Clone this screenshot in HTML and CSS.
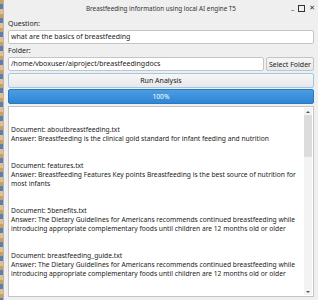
FILE: index.html
```html
<!DOCTYPE html>
<html lang="en">
<head>
  <meta charset="UTF-8" />
  <title>Breastfeeding information using local AI engine T5</title>
  <link rel="stylesheet" href="styles.css">
</head>
<body>
  <div class="desktop-edge"></div>

  <div class="window">
    <div class="titlebar">
      <span class="title">Breastfeeding information using local AI engine T5</span>
      <div class="controls">
        <span class="ctl">_</span>
        <span class="ctl box"></span>
        <span class="ctl">✕</span>
      </div>
    </div>

    <div class="content">
      <label class="label">Question:</label>
      <div class="input">what are the basics of breastfeeding</div>

      <label class="label">Folder:</label>
      <div class="folder-row">
        <div class="input grow">/home/vboxuser/aiproject/breastfeedingdocs</div>
        <button class="btn">Select Folder</button>
      </div>

      <button class="btn run">Run Analysis</button>

      <div class="progress">100%</div>

      <div class="results">
        <div class="results-text">

Document: aboutbreastfeeding.txt
Answer: Breastfeeding is the clinical gold standard for infant feeding and nutrition


Document: features.txt
Answer: Breastfeeding Features Key points Breastfeeding is the best source of nutrition for most infants


Document: 5benefits.txt
Answer: The Dietary Guidelines for Americans recommends continued breastfeeding while introducing appropriate complementary foods until children are 12 months old or older


Document: breastfeeding_guide.txt
Answer: The Dietary Guidelines for Americans recommends continued breastfeeding while introducing appropriate complementary foods until children are 12 months old or older</div>
        <div class="scrollbar">
          <span class="arrow up"></span>
          <span class="thumb"></span>
          <span class="arrow down"></span>
        </div>
      </div>
    </div>
  </div>
</body>
</html>
```

FILE: styles.css
```css
body {
  margin: 0;
  width: 318px;
  height: 300px;
  display: flex;
  overflow: hidden;
  background: #efefef;
  font-family: "Noto Sans", "DejaVu Sans", sans-serif;
  font-size: 6.7px;
  color: #222;
}

.desktop-edge {
  width: 3px;
  flex-shrink: 0;
  background: repeating-linear-gradient(to bottom, #c8a060 0, #c8a060 4px, #5c7fb0 4px, #5c7fb0 9px, #e0c090 9px, #e0c090 14px);
  border-right: 1px solid #b5b5b5;
}

.window {
  flex: 1;
  display: flex;
  flex-direction: column;
  min-width: 0;
}

.titlebar {
  height: 17px;
  display: flex;
  align-items: center;
  justify-content: center;
  position: relative;
  background: #efefef;
}

.title {
  font-size: 6.3px;
  color: #333;
}

.controls {
  position: absolute;
  right: 3px;
  top: 4px;
  display: flex;
  gap: 4px;
  align-items: center;
}

.ctl {
  font-size: 7px;
  color: #333;
  font-weight: bold;
  line-height: 8px;
}

.ctl.box {
  width: 5px;
  height: 5px;
  border: 1px solid #333;
}

.content {
  flex: 1;
  display: flex;
  flex-direction: column;
  padding: 0 4px 3px 4px;
}

.label {
  height: 11px;
  line-height: 11px;
  margin-top: 1px;
  font-size: 7px;
}

.input {
  height: 12px;
  line-height: 12px;
  margin-top: 1px;
  background: #fff;
  border: 1px solid #c4c4c4;
  border-radius: 2px;
  padding: 0 2px;
  font-size: 7px;
  white-space: nowrap;
  overflow: hidden;
}

.folder-row {
  display: flex;
  gap: 2px;
  margin-top: 1px;
}

.folder-row .input {
  margin-top: 0;
}

.grow {
  flex: 1;
}

.btn {
  font-family: inherit;
  font-size: 7px;
  color: #222;
  background: linear-gradient(to bottom, #f6f6f6, #e8e8e8);
  border: 1px solid #c4c4c4;
  border-radius: 2px;
  height: 14px;
  padding: 0 2px;
  margin: 0;
}

.run {
  margin-top: 2px;
  height: 15px;
  border-color: #9cc8ea;
}

.progress {
  margin-top: 1px;
  height: 13px;
  line-height: 13px;
  text-align: center;
  color: #fff;
  background: linear-gradient(to bottom, #4a9de2, #2f86d4);
  border: 1px solid #2a78c0;
  border-radius: 2px;
}

.results {
  margin-top: 2px;
  flex: 1;
  display: flex;
  background: #fff;
  border: 1px solid #c4c4c4;
  min-height: 0;
}

.results-text {
  flex: 1;
  padding: 0 2px;
  white-space: pre-wrap;
  line-height: 9px;
  overflow: hidden;
}

.scrollbar {
  width: 8px;
  display: flex;
  flex-direction: column;
  background: #f3f3f3;
  margin: 1px 1px 1px 0;
}

.arrow {
  height: 7px;
  display: flex;
  align-items: center;
  justify-content: center;
}

.arrow::after {
  content: "";
  border-left: 2px solid transparent;
  border-right: 2px solid transparent;
}

.arrow.up::after {
  border-bottom: 2px solid #555;
}

.arrow.down::after {
  border-top: 2px solid #555;
}

.thumb {
  height: 42px;
  background: #dcdcdc;
  border-radius: 1px;
}

.scrollbar::after {
  content: "";
  flex: 1;
}

.scrollbar .arrow.down {
  order: 3;
}
```
